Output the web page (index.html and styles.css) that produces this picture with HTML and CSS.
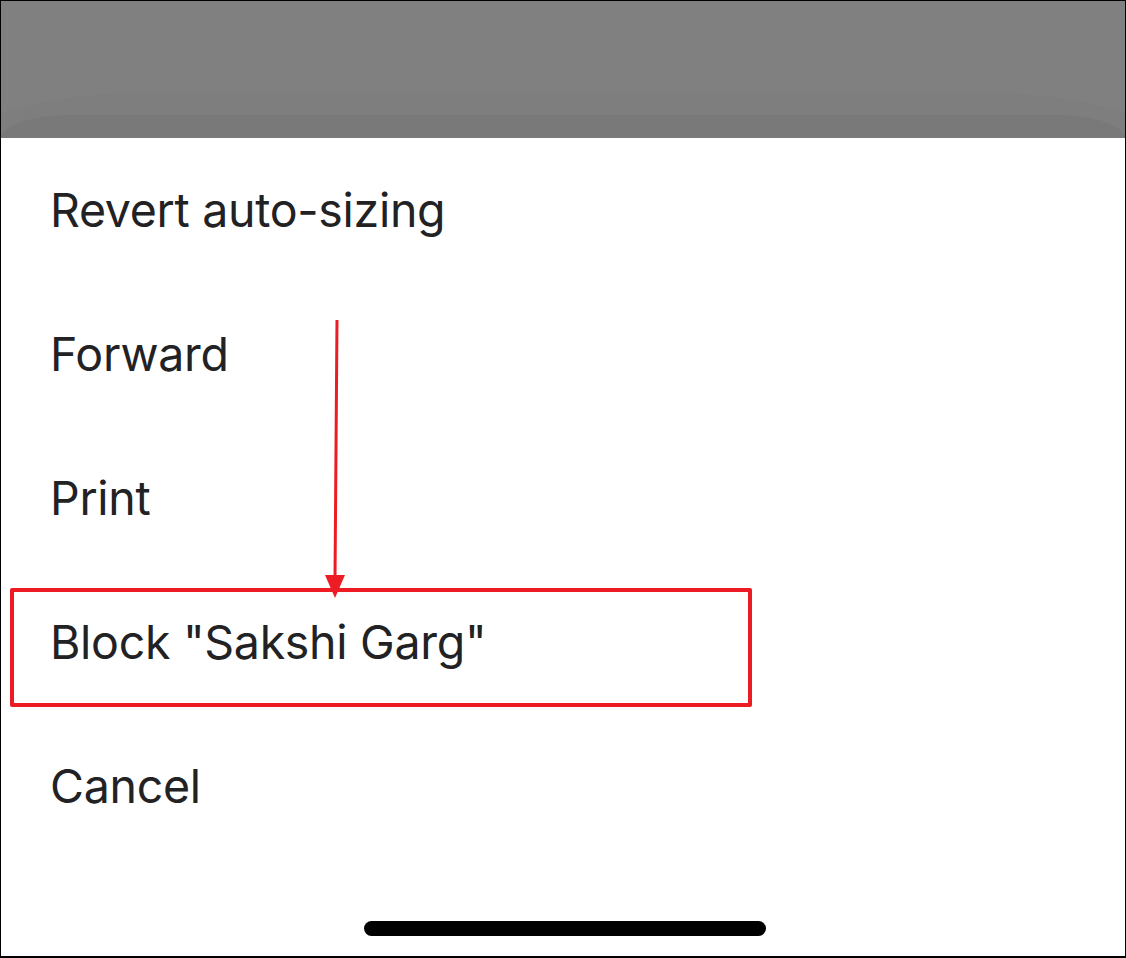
FILE: index.html
```html
<!DOCTYPE html>
<html>
<head>
<meta charset="utf-8">
<link rel="stylesheet" href="styles.css">
</head>
<body>
<div class="frame">
  <div class="dim">
    <div class="dim-band1"></div>
    <div class="dim-band2"></div>
  </div>
  <ul class="sheet">
    <li class="item">Revert auto-sizing</li>
    <li class="item">Forward</li>
    <li class="item">Print</li>
    <li class="item">Block "Sakshi Garg"</li>
    <li class="item">Cancel</li>
  </ul>
  <div class="home-area"><div class="home-indicator"></div></div>
  <div class="highlight"></div>
  <svg class="arrow" width="40" height="300" viewBox="0 0 40 300">
    <line x1="28" y1="0" x2="26" y2="260" stroke="#ed1c24" stroke-width="3" stroke-linecap="round"/>
    <polygon points="16,255 36,255 26,278" fill="#ed1c24"/>
  </svg>
</div>
</body>
</html>
```
FILE: styles.css
```css
html, body {
  margin: 0;
  padding: 0;
  background: #fff;
}
.frame {
  position: relative;
  width: 1126px;
  height: 958px;
  box-sizing: border-box;
  border: 1px solid #000;
  border-bottom-width: 2px;
  overflow: hidden;
  background: #fff;
  font-family: Inter, "Noto Sans", sans-serif;
}
.dim {
  position: relative;
  height: 137px;
  background: #808080;
  overflow: hidden;
}
.dim-band1 {
  position: absolute;
  left: -20px;
  right: -20px;
  top: 90px;
  height: 120px;
  background: #7e7e7e;
  border-radius: 200px 200px 0 0 / 40px 40px 0 0;
}
.dim-band2 {
  position: absolute;
  left: 0;
  right: 0;
  top: 114px;
  height: 120px;
  background: #797979;
  border-radius: 70px 70px 0 0 / 24px 24px 0 0;
}
.sheet {
  list-style: none;
  margin: 0;
  padding: 0;
}
.item {
  height: 144px;
  line-height: 144px;
  padding-left: 49px;
  font-size: 46.5px;
  color: #222224;
  letter-spacing: -0.3px;
}
.home-area {
  display: flex;
  justify-content: center;
  padding-top: 63px;
}
.home-indicator {
  width: 402px;
  height: 15px;
  border-radius: 8px;
  background: #000;
  margin-left: 3px;
}
.highlight {
  position: absolute;
  left: 9px;
  top: 587px;
  width: 742px;
  height: 119px;
  box-sizing: border-box;
  border: 4px solid #ed1c24;
  border-radius: 2px;
}
.arrow {
  position: absolute;
  left: 308px;
  top: 319px;
}
```
